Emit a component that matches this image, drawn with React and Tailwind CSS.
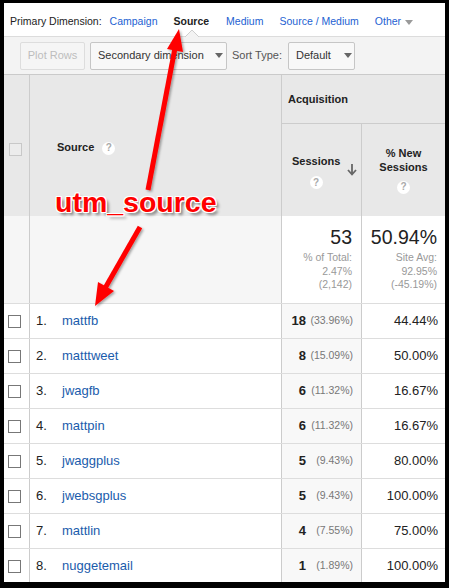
export default function App() {
  const rows = [
    ["1.", "mattfb", "18", "(33.96%)", "44.44%"],
    ["2.", "matttweet", "8", "(15.09%)", "50.00%"],
    ["3.", "jwagfb", "6", "(11.32%)", "16.67%"],
    ["4.", "mattpin", "6", "(11.32%)", "16.67%"],
    ["5.", "jwaggplus", "5", "(9.43%)", "80.00%"],
    ["6.", "jwebsgplus", "5", "(9.43%)", "100.00%"],
    ["7.", "mattlin", "4", "(7.55%)", "75.00%"],
    ["8.", "nuggetemail", "1", "(1.89%)", "100.00%"],
  ];

  const Help = () => (
    <span className="inline-flex items-center justify-center w-[13px] h-[13px] rounded-full bg-white text-[#aaaaaa] text-[10px] font-bold leading-none">?</span>
  );

  const Tri = ({ c = "#666" }) => (
    <svg width="8" height="5" viewBox="0 0 8 5"><path d="M0 0h8L4 5z" fill={c} /></svg>
  );

  return (
    <div className="relative w-[449px] h-[588px] bg-black pt-[3px] pl-[4px] pr-[4px] pb-[6px] font-['Liberation_Sans',Arial,sans-serif]">
      <div className="bg-white w-[441px] h-[579px] overflow-hidden flex flex-col">
        {/* nav */}
        <div className="relative h-[34px] shrink-0 border-b border-[#dcdcdc] flex items-center text-[10.5px] pl-[6px] pt-[4px]">
          <span className="text-[#222]">Primary Dimension:</span>
          <span className="ml-[8px] text-[#1d5fd2]">Campaign</span>
          <span className="ml-[16px] text-[#222] font-bold">Source</span>
          <span className="ml-[17px] text-[#1d5fd2]">Medium</span>
          <span className="ml-[16px] text-[#1d5fd2]">Source / Medium</span>
          <span className="ml-[16px] text-[#1d5fd2]">Other</span>
          <span className="ml-[4px] mt-[1px]"><Tri c="#9a9a9a" /></span>
          <svg className="absolute left-[181px] bottom-[-1px]" width="14" height="7" viewBox="0 0 14 7">
            <path d="M0 7L7 0L14 7" fill="#f3f3f3" stroke="#cfcfcf" strokeWidth="1" />
          </svg>
        </div>
        {/* toolbar */}
        <div className="h-[38px] shrink-0 bg-[#f3f3f3] border-b border-[#cacaca] flex items-center pl-[16px] text-[11px]">
          <div className="w-[65px] h-[28px] border border-[#dddddd] rounded-[2px] bg-[#f5f5f5] flex items-center justify-center text-[#bdbdbd]">Plot Rows</div>
          <div className="ml-[5px] w-[137px] h-[28px] border border-[#c6c6c6] rounded-[2px] bg-[#f8f8f8] flex items-center pl-[7px] text-[#333]">
            <span>Secondary dimension</span>
            <span className="ml-[11px]"><Tri c="#666" /></span>
          </div>
          <span className="ml-[5px] text-[#555]">Sort Type:</span>
          <div className="ml-[6px] w-[67px] h-[28px] border border-[#c6c6c6] rounded-[2px] bg-[#f8f8f8] flex items-center pl-[7px] text-[#333]">
            <span>Default</span>
            <span className="ml-[13px]"><Tri c="#666" /></span>
          </div>
        </div>
        {/* header */}
        <div className="flex h-[141px] shrink-0 bg-[#e8e8e8] text-[11px] font-bold text-[#222]">
          <div className="w-[26px] border-r border-[#cccccc] flex items-center pl-[5px] pt-[8px]">
            <div className="w-[13px] h-[13px] border border-[#c8c8c8] bg-[#ececec]" />
          </div>
          <div className="w-[252px] border-r border-[#cccccc] flex items-center pl-[27px] pt-[4px]">
            <span>Source</span>
            <span className="ml-[8px]"><Help /></span>
          </div>
          <div className="flex-1 flex flex-col">
            <div className="h-[49px] border-b border-[#cccccc] flex items-center pl-[6px]">Acquisition</div>
            <div className="flex flex-1">
              <div className="w-[80px] border-r border-[#cccccc] relative">
                <div className="absolute left-[10px] top-[29px] flex flex-col items-center">
                  <span>Sessions</span>
                  <span className="mt-[4px]"><Help /></span>
                </div>
                <svg className="absolute left-[65px] top-[40px]" width="10" height="12" viewBox="0 0 10 12">
                  <path d="M5 0v10M1 6l4 4.5L9 6" stroke="#666" strokeWidth="1.8" fill="none" />
                </svg>
              </div>
              <div className="flex-1 flex flex-col items-center pt-[22px] leading-[14px] text-center">
                <span>% New</span>
                <span>Sessions</span>
                <span className="mt-[5px]"><Help /></span>
              </div>
            </div>
          </div>
        </div>
        {/* summary */}
        <div className="flex h-[88px] shrink-0 border-b border-[#dddddd]">
          <div className="w-[26px] border-r border-[#cccccc] bg-[#f6f6f6]" />
          <div className="w-[252px] border-r border-[#cccccc] bg-[#f6f6f6]" />
          <div className="w-[80px] border-r border-[#cccccc] flex flex-col items-end pr-[9px] pt-[9px] text-[#999] text-[10.5px] leading-[13.5px]">
            <span className="text-[19.5px] leading-[24px] text-[#222] mb-[2px]">53</span>
            <span>% of Total:</span>
            <span>2.47%</span>
            <span>(2,142)</span>
          </div>
          <div className="flex-1 flex flex-col items-end pr-[8px] pt-[9px] text-[#999] text-[10.5px] leading-[13.5px]">
            <span className="text-[19.5px] leading-[24px] text-[#222] mb-[2px]">50.94%</span>
            <span>Site Avg:</span>
            <span>92.95%</span>
            <span>(-45.19%)</span>
          </div>
        </div>
        {/* rows */}
        {rows.map((r) => (
          <div key={r[0]} className="flex h-[35px] shrink-0 border-b border-[#dddddd] text-[13px] text-[#222]">
            <div className="w-[26px] border-r border-[#cccccc] flex items-center pl-[4px]">
              <div className="w-[13px] h-[13px] border border-[#777] bg-white" />
            </div>
            <div className="w-[252px] border-r border-[#cccccc] flex items-center pl-[6px]">
              <span className="w-[26px]">{r[0]}</span>
              <span className="text-[#1a5cac]">{r[1]}</span>
            </div>
            <div className="w-[80px] border-r border-[#cccccc] bg-[#f8f8f8] flex items-center justify-end pr-[8px]">
              <span className="font-bold">{r[2]}</span>
              <span className="w-[47px] text-right text-[10.5px] text-[#777]">{r[3]}</span>
            </div>
            <div className="flex-1 flex items-center justify-end pr-[7px]">{r[4]}</div>
          </div>
        ))}
      </div>

      {/* annotations */}
      <svg className="absolute left-0 top-0 pointer-events-none" width="449" height="588" viewBox="0 0 449 588">
        <defs>
          <filter id="sh" x="-20%" y="-20%" width="140%" height="140%">
            <feDropShadow dx="1.5" dy="1.5" stdDeviation="1.2" floodColor="#000" floodOpacity="0.35" />
          </filter>
        </defs>
        <g filter="url(#sh)">
          <line x1="148" y1="190" x2="175" y2="48" stroke="#ff0000" strokeWidth="5" />
          <path d="M179 29 L183 52 L167 49 Z" fill="#ff0000" />
          <line x1="140" y1="227" x2="104" y2="290" stroke="#ff0000" strokeWidth="5" />
          <path d="M95 306 L114 291 L98 282 Z" fill="#ff0000" />
        </g>
      </svg>
      <div className="absolute left-[55px] top-[188px] text-[28.5px] leading-none font-bold text-[#ff0000] [text-shadow:1px_0_0_#fff,-1px_0_0_#fff,0_1px_0_#fff,0_-1px_0_#fff,1px_1px_0_#fff,-1px_-1px_0_#fff,1px_-1px_0_#fff,-1px_1px_0_#fff,3px_3px_3px_rgba(0,0,0,0.45)]">
        utm_source
      </div>
    </div>
  );
}
